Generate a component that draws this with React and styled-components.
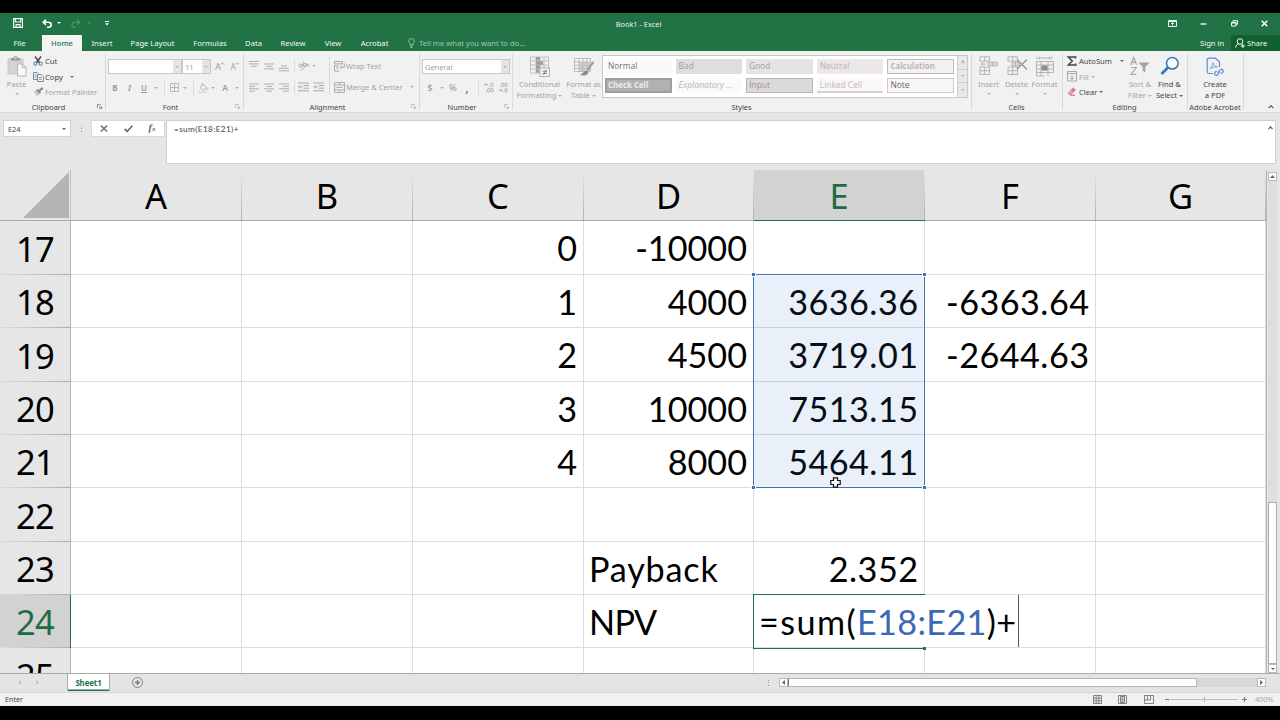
import React from "react";
import styled, { createGlobalStyle, css } from "styled-components";

const ui = `"Noto Sans", "Open Sans", sans-serif`;
const body = `Lato, "Open Sans", sans-serif`;

const Global = createGlobalStyle`
  * { box-sizing: border-box; }
  body { margin: 0; background: #000; overflow: hidden; }
  svg { display: block; flex: none; overflow: visible; }
`;

const Screen = styled.div`
  width: 1280px;
  height: 720px;
  padding: 13px 0 14px;
  background: #000;
  font-family: ${ui};
  font-size: 7.6px;
  line-height: 10px;
  color: #444;
  white-space: nowrap;
  display: flex;
  flex-direction: column;
`;

/* ---------- shared parts ---------- */
const Slot = styled.div`
  flex: none;
  width: ${(p) => p.$w}px;
  display: flex;
  align-items: center;
  justify-content: ${(p) => p.$j || "flex-start"};
`;
const Label = styled.span`
  color: ${(p) => p.$c || (p.$off ? "#a5a1a3" : "#444")};
  letter-spacing: ${(p) => p.$ls || 0}px;
  font-size: ${(p) => p.$s || 7.6}px;
  font-weight: ${(p) => p.$b || 400};
`;
const Arrow = styled.i`
  flex: none;
  width: 0;
  height: 0;
  border: 2px solid transparent;
  border-top-color: ${(p) => p.$c || "#b5b2b3"};
  border-bottom: 0;
`;
const Sep = styled.i`
  flex: none;
  width: 1px;
  height: ${(p) => p.$h || 14}px;
  background: #dadada;
`;

/* ---------- title bar and tabs ---------- */
const TitleBar = styled.header`
  height: 22px;
  flex: none;
  background: #217346;
  color: #e8f2ec;
  display: grid;
  grid-template-columns: 1fr 100px 1fr;
  align-items: center;
`;
const QuickAccess = styled.div`
  display: flex;
  align-items: center;
  padding: 0 0 2px 13px;
`;
const Title = styled.div`
  text-align: center;
  font-size: 7.4px;
  padding: 0 3px 0 0;
`;
const WindowButtons = styled.div`
  display: flex;
  justify-content: flex-end;
  align-items: center;
  padding: 0 12px 1px 0;
`;
const TabBar = styled.nav`
  height: 16px;
  flex: none;
  background: #217346;
  color: #f2f8f4;
  display: flex;
  align-items: center;
`;
const Tab = styled.div`
  flex: none;
  width: ${(p) => p.$w}px;
  height: 16px;
  line-height: 17px;
  text-align: center;
  font-size: 7.6px;
  ${(p) =>
    p.$active &&
    css`
      background: #f3f3f3;
      color: #217346;
      font-weight: 500;
    `}
`;
const TellMe = styled.div`
  display: flex;
  align-items: center;
  gap: 4px;
  padding-left: 9px;
  color: #9cc9ae;
  flex: 1;
`;
const Share = styled.div`
  width: 49px;
  height: 16px;
  background: #0f6130;
  display: flex;
  align-items: center;
  gap: 2px;
  padding-left: 4px;
`;

/* ---------- ribbon ---------- */
const Ribbon = styled.section`
  height: 62px;
  flex: none;
  background: #f1f1f1;
  border-bottom: 1px solid #d9d9d9;
  display: flex;
`;
const Group = styled.div`
  flex: none;
  width: ${(p) => p.$w}px;
  display: grid;
  grid-template-columns: 100%;
  grid-template-rows: 50px 11px;
  background: linear-gradient(#dadada, #dadada) right 3px / 1px 56px no-repeat;
`;
const GroupBody = styled.div`
  display: flex;
  min-width: 0;
`;
const GroupName = styled.div`
  display: grid;
  grid-template-columns: 1fr ${(p) => (p.$plain ? 0 : 5)}px;
  align-items: center;
  padding-right: ${(p) => (p.$plain ? 2 : 4)}px;
  font-size: 7.4px;
  text-align: center;
`;
const Collapse = styled.div`
  width: 31px;
  display: flex;
  align-items: flex-end;
  justify-content: flex-end;
  padding: 0 1px 3px 0;
`;
const Stack = styled.div`
  flex: none;
  width: ${(p) => p.$w}px;
  padding-top: ${(p) => p.$pt || 0}px;
  display: flex;
  flex-direction: column;
`;
const Row = styled.div`
  display: flex;
  align-items: center;
  height: ${(p) => p.$h}px;
  padding-left: ${(p) => p.$pl || 0}px;
`;
const Big = styled.div`
  flex: none;
  width: ${(p) => p.$w}px;
  padding-top: 5px;
  display: flex;
  flex-direction: column;
  align-items: center;
  text-align: center;
  & > svg { margin-bottom: 2px; }
`;
const BigLine = styled.div`
  height: 11px;
  line-height: 11px;
  display: flex;
  align-items: center;
  gap: 2px;
  color: ${(p) => (p.$off ? "#a5a1a3" : "#444")};
`;
const Combo = styled.div`
  flex: none;
  width: ${(p) => p.$w}px;
  height: 15px;
  border: 1px solid #c8c6c7;
  background: #fff;
  display: flex;
  justify-content: space-between;
  align-items: center;
  padding-left: 2px;
  color: #a5a1a3;
`;
const ComboButton = styled.span`
  width: 8px;
  height: 13px;
  background: #e6e4e5;
  display: flex;
  align-items: center;
  justify-content: center;
`;
const Gallery = styled.div`
  width: 366px;
  height: 43px;
  margin: 4px 0 0 1px;
  border: 1px solid #c9c7c8;
  background: #fff;
  display: flex;
`;
const GalleryGrid = styled.div`
  display: grid;
  grid-template-columns: repeat(5, 66.6px);
  grid-auto-rows: 15px;
  gap: 4px;
  padding: 3px 2px;
  width: 354px;
`;
const StyleCell = styled.div`
  font-family: "Open Sans", ${ui};
  font-size: 8.4px;
  line-height: ${(p) => (p.$bd ? 12 : 14)}px;
  padding-left: ${(p) => (p.$bd ? 2 : 3)}px;
  overflow: hidden;
  background: ${(p) => p.$bg};
  color: ${(p) => p.$c};
  border: ${(p) => p.$bd || "0"};
  ${(p) => p.$extra}
`;
const GalleryScroll = styled.div`
  width: 10px;
  border-left: 1px solid #cfcdce;
  background: #e9e7e8;
  display: grid;
  grid-template-rows: repeat(3, 1fr);
  & > span {
    display: flex;
    align-items: center;
    justify-content: center;
    border-bottom: 1px solid #cfcdce;
  }
  & > span:last-child { border-bottom: 0; }
`;

/* ---------- formula bar ---------- */
const FormulaBar = styled.section`
  height: 57px;
  flex: none;
  background: #e6e6e6;
  display: flex;
  align-items: flex-start;
  padding: 7px 4px 0 3px;
`;
const NameBox = styled.div`
  width: 68px;
  height: 17px;
  background: #fff;
  border: 1px solid #d4d4d4;
  display: flex;
  align-items: center;
  justify-content: space-between;
  padding: 0 4px;
  font-size: 7.4px;
`;
const Dots = styled.div`
  width: 20px;
  height: 17px;
  display: flex;
  flex-direction: column;
  align-items: center;
  justify-content: center;
  gap: 1.5px;
  & > i { width: 1px; height: 1px; background: #999; }
`;
const FxButtons = styled.div`
  width: 74px;
  height: 17px;
  background: #fff;
  border: 1px solid #d9d9d9;
  display: grid;
  grid-template-columns: repeat(3, 24px);
  align-items: center;
  justify-items: center;
`;
const Fx = styled.span`
  font-family: "Liberation Serif", serif;
  font-style: italic;
  font-weight: 700;
  font-size: 10px;
  color: #666;
  & > small { font-size: 7px; }
`;
const FormulaInput = styled.div`
  flex: 1;
  height: 44px;
  margin-left: 1px;
  background: #fff;
  border: 1px solid #d0d0d0;
  display: flex;
  justify-content: space-between;
  padding: 3px 2px 0 7px;
  color: #444;
  font-family: Lato, sans-serif;
  font-size: 8.2px;
  letter-spacing: 0.4px;
`;

/* ---------- sheet ---------- */
const Work = styled.main`
  height: 503px;
  flex: none;
  display: flex;
  background: #e6e6e6;
`;
const Sheet = styled.div`
  position: relative;
  width: 1266px;
  height: 503px;
  overflow: hidden;
  display: grid;
  grid-template-columns: 71px 171px 171px 171px 170px 171px 171px 170px;
  grid-template-rows: 51px 54px 53px 54px 53px 53px 54px 53px 53px 54px;
  background: #fff;
`;
const Corner = styled.div`
  background: #e6e6e6;
  border-right: 1px solid #c4c4c4;
  border-bottom: 1px solid #ababab;
  display: flex;
  align-items: flex-end;
  justify-content: flex-end;
  padding: 0 1px 2px 0;
`;
const head = css`
  display: flex;
  align-items: center;
  justify-content: center;
  font-family: ${ui};
  font-size: 34.5px;
  line-height: 40px;
  color: ${(p) => (p.$on ? "#1f6b43" : "#000")};
`;
const ColHead = styled.div`
  ${head};
  padding: 1px 1px 0 0;
  background: linear-gradient(to bottom, #e6e6e6, #b0b0b0) right / 1px 100% no-repeat, ${(p) => (p.$on ? "#d2d2d2" : "#e6e6e6")};
  border-bottom: 1px solid ${(p) => (p.$on ? "#217346" : "#ababab")};
`;
const RowHead = styled.div`
  ${head};
  padding-top: 1px;
  letter-spacing: -0.7px;
  background: linear-gradient(to right, #dcdcdc, #adadad) bottom / 100% 1px no-repeat, ${(p) => (p.$on ? "#d2d2d2" : "#e6e6e6")};
  border-right: ${(p) => (p.$on ? "1.5px solid #217346" : "1px solid #b5b5b5")};
`;
const Cell = styled.div`
  border-right: 1px solid #dcdcdc;
  border-bottom: 1px solid #dcdcdc;
  padding: 1px ${(p) => 6 - (p.$ls || 0)}px 0 5px;
  font-family: ${body};
  font-size: 34.2px;
  line-height: 51px;
  letter-spacing: ${(p) => p.$ls || 0}px;
  color: #000;
  text-align: ${(p) => p.$align || "right"};
`;
const RangeBox = styled.div`
  position: absolute;
  left: 753px;
  top: 104px;
  width: 172px;
  height: 214px;
  border: 1px solid #3f72ae;
  background: rgba(68, 114, 196, 0.11);
  box-shadow: inset 0 0 0 1px rgba(255, 255, 255, 0.35);
`;
const Handle = styled.i`
  position: absolute;
  width: 3px;
  height: 3px;
  background: #3f72ae;
  box-shadow: 0 0 0 1px #fff;
  ${(p) => p.$y}: -2px;
  ${(p) => p.$x}: -2px;
`;
const ActiveCell = styled.div`
  position: absolute;
  left: 753px;
  top: 424px;
  width: 172px;
  height: 55px;
  border: 1px solid #217346;
  border-right: 0;
`;
const Editor = styled.div`
  position: absolute;
  left: 754px;
  top: 425px;
  width: 265px;
  height: 52px;
  padding: 1px 0 0 5px;
  background: #fff;
  border-right: 1px solid #555;
  font-family: ${body};
  font-size: 34.2px;
  line-height: 51px;
  color: #000;
`;
const Token = styled.span`
  letter-spacing: ${(p) => p.$ls}px;
  color: ${(p) => (p.$ref ? "#3a69b5" : "#000")};
`;
const FillHandle = styled.i`
  position: absolute;
  left: 923px;
  top: 477px;
  width: 3px;
  height: 3px;
  background: #217346;
`;
const Pointer = styled.div`
  position: absolute;
  left: 830px;
  top: 307px;
`;
const VScroll = styled.div`
  width: 14px;
  padding: 2px 4px 0 2px;
  border-left: 1px solid #b5b5b5;
  display: flex;
  flex-direction: column;
  align-items: center;
`;
const ScrollButton = styled.span`
  flex: none;
  width: 9px;
  height: 9px;
  background: #fff;
  border: 1px solid #b8b8b8;
  display: flex;
  align-items: center;
  justify-content: center;
`;
const VTrack = styled.div`
  flex: 1;
  width: 9px;
  background: #dedede;
  display: flex;
  align-items: flex-end;
`;
const VThumb = styled.div`
  width: 9px;
  height: 162px;
  background: #fff;
  border: 1px solid #ababab;
`;

/* ---------- sheet tabs and status ---------- */
const SheetTabs = styled.section`
  height: 19px;
  flex: none;
  background: #e4e4e4;
  border-top: 1px solid #ababab;
  display: flex;
  align-items: center;
  padding-bottom: 1px;
`;
const SheetTab = styled.div`
  width: 43px;
  height: 17px;
  margin: -1px 0 0 29px;
  background: #fff;
  border: solid #ababab;
  border-width: 0 1px;
  box-shadow: inset 0 -1.5px 0 #217346;
  color: #217346;
  font-size: 7.9px;
  font-weight: 700;
  line-height: 18px;
  text-align: center;
  letter-spacing: -0.1px;
`;
const HBar = styled.div`
  width: 487px;
  margin-left: auto;
  margin-right: 14px;
  height: 9px;
  display: flex;
  background: #d8d8d8;
`;
const HThumb = styled.div`
  width: 409px;
  height: 9px;
  background: #fff;
  border: 1px solid #b5b5b5;
  border-left-color: #777;
  margin-right: auto;
`;
const Status = styled.footer`
  height: 14px;
  flex: none;
  background: #f1f1f1;
  border-top: 1px solid #d4d4d4;
  display: flex;
  align-items: center;
  padding: 0 5px 1px;
  font-size: 7.2px;
`;
const ZoomTrack = styled.div`
  width: 67px;
  height: 5px;
  background: linear-gradient(#bbb, #bbb) center / 100% 1px no-repeat,
    linear-gradient(#aaa, #aaa) center / 1px 5px no-repeat;
`;

/* ---------- drawings ---------- */
const Svg = ({ w, h, c = "#aaa6a8", sw = 1, children }) => (
  <svg width={w} height={h} viewBox={`0 0 ${w} ${h}`} fill="none" stroke={c} strokeWidth={sw}>
    {children}
  </svg>
);
const Launcher = ({ off }) => (
  <Svg w={5} h={5} c={off ? "#b5b2b3" : "#777"} sw={0.8}>
    <path d="M.4 4V.4H4M2 2l2.4 2.4M4.6 2.4v2.2H2.4" />
  </Svg>
);
const Chevron = ({ c = "#555", w = 6 }) => (
  <Svg w={w} h={4} c={c} sw={1.1}><path d={`M.5 3.2 ${w / 2} .8 ${w - 0.5} 3.2`} /></Svg>
);
const CaretMark = ({ down }) => (
  <Svg w={3} h={10} c="#999" sw={0.9}><path d={down ? "M0 .8 1.5 2.4 3 .8" : "M0 2.4 1.5.8 3 2.4"} /></Svg>
);
const Lines = ({ rows, step = 2.4, h = 10, y = 1 }) => (
  <Svg w={10} h={h} sw={0.9}>
    {rows.map(([a, b], i) => <path key={i} d={`M${a} ${y + i * step}H${b}`} />)}
  </Svg>
);
const PasteIcon = () => (
  <Svg w={20} h={21}>
    <rect x="1" y="3" width="15" height="15" fill="#d6d2d5" stroke="#cbc7ca" />
    <path d="M4 4.5V2h2.5V.6h4V2H13v2.5z" fill="#9c999a" stroke="none" />
    <path d="M7.2 2.3h2.4" stroke="#eee" />
    <path d="M10.5 8h5l3.5 3.5V20h-8.5z" fill="#fafafa" stroke="#b5b2b3" />
    <path d="M15.3 8v3.5H19" stroke="#b5b2b3" />
  </Svg>
);
const CutIcon = () => (
  <Svg w={10} h={10}>
    <path d="M2 .5 6.8 7M8 .5 3.2 7" stroke="#444" strokeWidth="1.4" />
    <circle cx="2.3" cy="7.7" r="1.6" stroke="#3c7a9e" />
    <circle cx="7.7" cy="7.7" r="1.6" stroke="#3c7a9e" />
  </Svg>
);
const CopyIcon = () => (
  <Svg w={11} h={10} c="#5d7f92" sw={0.9}>
    <path d="M.5 7.5v-7h3.6l1.6 1.6v5.4z" fill="#f8f8f8" />
    <path d="M1.7 3h2M1.7 5h2" />
    <path d="M4.5 9.5V2.6h3.8L10.3 4.4v5.1z" fill="#fff" />
    <path d="M5.8 5.3h3M5.8 7.3h3" />
  </Svg>
);
const PainterIcon = () => (
  <Svg w={11} h={10}>
    <path d="M.5 4.5 4 3l3 3-2.4 3.5z" fill="#c9c4c2" stroke="none" />
    <path d="M4 2.5 7.5 6" stroke="#8d8a8b" strokeWidth="1.8" />
    <path d="M6 4 9.8.8" stroke="#8d8a8b" strokeWidth="2.2" />
  </Svg>
);
const BordersIcon = () => (
  <Svg w={9} h={9} c="#b5b2b3" sw={0.9}><path d="M.5.5h8v8h-8zM4.5.5v8M.5 4.5h8" /></Svg>
);
const FillColorIcon = () => (
  <Svg w={11} h={10} sw={0.9}>
    <path d="M2 4.5 5.3 1.3 8.6 4.5 5.3 7.6zM4.2 2.4V.4M8.8 4.5c.9 1 1.1 2 .5 2.6" />
    <path d="M.5 9.2h8" stroke="#e3d5d5" strokeWidth="1.6" />
  </Svg>
);
const AngleIcon = () => (
  <Svg w={11} h={10} sw={0.9}>
    <circle cx="2.3" cy="4.6" r="1.5" /><path d="M3.9 3v3.2M5.2.6v4.8" /><circle cx="6.9" cy="3.8" r="1.4" />
    <path d="M2.5 9.5 10 3.4M7.8 3.2h2.400v2.400" />
  </Svg>
);
const IndentIcon = ({ right }) => (
  <Svg w={11} h={10}>
    <path d="M0 1h11M5.5 3.6H11M5.5 6.2H11M0 8.8h11" />
    <path d={right ? "M0 4.9h4M2.4 3.3 4 4.9 2.4 6.5" : "M4.6 4.9H.6M2.2 3.3.6 4.9l1.6 1.6"} />
  </Svg>
);
const WrapIcon = () => (
  <Svg w={11} h={11}>
    <path d="M.5.5h8v2.4h-8zM.5 4.8h4M.5 4.5v5.6h5M2 7h3" />
    <path d="M10.3 2.3v3.9H6.3M8 4.6 6.3 6.2 8 7.8" />
  </Svg>
);
const MergeIcon = () => (
  <Svg w={11} h={11} sw={0.9}>
    <path d="M.5.5h10v10H.5zM.5 3h10M.5 8h10M5.5.5V3M5.5 8v2.5M2.4 5.5h6.2" />
  </Svg>
);
const DecimalIcon = ({ inc }) => (
  <Svg w={11} h={11} sw={0.8}>
    {inc ? <path d="M4.2 2.6H.6M2 1.2.6 2.6 2 4" /> : <path d="M.6 8.4h3.6M2.8 7l1.4 1.4-1.4 1.4" />}
    <rect x="7" y="1" width="2.2" height="3.6" rx="1" />
    {!inc && <rect x="3.6" y="1" width="2.2" height="3.6" rx="1" />}
    <rect x="7" y="6.4" width="2.2" height="3.6" rx="1" />
    {inc && <rect x="3.6" y="6.4" width="2.2" height="3.6" rx="1" />}
    <path d={inc ? "M5.4 4.6h.9M2 10h.9" : "M2 4.6h.9M5.4 10h.9"} />
  </Svg>
);
const ConditionalIcon = () => (
  <Svg w={20} h={21} c="#bdbabb" sw={0.9}>
    <path d="M.5 1h18v16H.5zM.5 5h18M.5 9h18M.5 13h18M6 1v16M10 1v16M14 1v16" />
    <path d="M6 2.800h4M6 7h7M6 11h4M6 15h3" stroke="#a09d9e" strokeWidth="3.400" />
    <rect x="10" y="12" width="9.5" height="8.5" fill="#f6f6f6" stroke="#aaa6a8" />
    <path d="M12.6 15.2h4.4M12.6 17.4h4.4M16.2 13.8l-2.6 5" stroke="#777" />
  </Svg>
);
const TableIcon = () => (
  <Svg w={20} h={21} c="#bdbabb">
    <path d="M.5 2.5h16v13H.5z" fill="#f6f6f6" />
    <path d="M5 6h11v9H5z" fill="#d3d0d1" stroke="none" />
    <path d="M.5 6h16M.5 9.2h16M.5 12.4h16M5 2.5v13M9 2.5v13M13 2.5v13" />
    <path d="M19.5 6c-1.5 2-4 5.5-6 8" stroke="#a09d9e" strokeWidth="2.2" />
    <path d="M12.5 14.5c-3 .5-3.5 3-6.5 4.5 3.5 1 8 .5 8.5-3z" fill="#8d8a8b" stroke="none" />
  </Svg>
);
const CellsIcon = ({ kind }) => (
  <Svg w={20} h={21} c="#b0adae" sw={0.9}>
    {kind === "format" ? (
      <>
        <path d="M2 .5v3M17 .5v3M3.5 2h12M5 .8 3.5 2 5 3.2M14 .8 15.5 2 14 3.2" />
        <path d="M1.5 5.5h17v11h-17zM1.5 9h17M1.5 13h17M6 5.5V20M13 5.5V20M1.5 16.5V20h8" />
        <rect x="6.5" y="9.5" width="6" height="5" fill="#8d8a8b" stroke="none" />
      </>
    ) : (
      <>
        <path d="M1 .8h9.500v4.400H1zM5.700.8v4.400" />
        <path d="M1 11h9.500v7.500H1zM1 14.700h9.500M5.700 11v7.500" />
        {kind === "insert" ? (
          <path d="M9 6.200h9.500v3.600H9zM13.700 6.200v3.600M7 8H2M3.800 6.200 2 8l1.800 1.800" fill="#dcdadb" />
        ) : (
          <>
            <path d="M5 6.200h7v3.600H5zM8.500 6.200v3.600" fill="#dcdadb" />
            <path d="M10 3.500 20 13.500M20 3.500 10 13" stroke="#9a9798" strokeWidth="1.5" />
          </>
        )}
      </>
    )}
  </Svg>
);
const SigmaIcon = () => (
  <Svg w={10} h={10} c="#444" sw={1.5}><path d="M8.6 2.5V1H1.3L5.2 5 1.3 9h7.5V7.4" /></Svg>
);
const FillIcon = () => (
  <Svg w={10} h={11}><path d="M.5.5h9V10h-9zM.5 2.5h9M5 3.8v4.7M3 6.7l2 2 2-2" /></Svg>
);
const EraserIcon = () => (
  <Svg w={10} h={9}>
    <path d="M1.5 5.2 6 .5l3 2.3-4.5 5z" fill="#e07a9b" stroke="none" />
    <path d="M2.7 3.9 6 6.3" stroke="#f6dfe6" />
    <path d="M1 6.2 3.5 8.2H8" stroke="#c2567c" />
  </Svg>
);
const SortIcon = () => (
  <Svg w={20} h={21} c="#aaa6a8" sw={1.2}>
    <path d="M.8 9 3.7 1.5 6.6 9M1.8 6.3h3.8M1 11.5h5.2L1 18.5h5.500" />
    <path d="M8.5 6.5h11L15.3 11v5.5l-2.600-1.800V11z" fill="#a5a2a3" stroke="none" />
  </Svg>
);
const FindIcon = () => (
  <Svg w={20} h={21} c="#3a76ad">
    <path d="M8 11.500 1.500 18" strokeWidth="2.600" />
    <circle cx="12.300" cy="7.300" r="5.800" fill="#f8fbfd" strokeWidth="1.500" />
  </Svg>
);
const PdfIcon = () => (
  <Svg w={18} h={21} c="#5b8fd0" sw={1.2}>
    <path d="M7 17.500H3A1.800 1.800 0 0 1 1.200 15.700V4A1.800 1.800 0 0 1 3 2.200h6.500L13.500 6v5" />
    <path d="M4 12.800c1.600-1.400 3-4 3-6.300M7 6.500c.4 2.500 1.700 4.100 4.300 4.500M4 12.800c1.700-1.500 4.500-2.200 7.300-1.800" strokeWidth=".8" />
    <path d="m11.500 16.600 2.800-2.800a1.700 1.700 0 0 1 2.500 2.500l-1.500 1.500M14.200 15.800l-2.800 3a1.600 1.600 0 0 1-2.400-2.300l1.600-1.700" />
  </Svg>
);

const DropArrow = ({ w = 7 }) => <Slot $w={w} $j="center"><Arrow /></Slot>;

const TABS = [
  ["File", 39], ["Home", 40, true], ["Insert", 40], ["Page Layout", 61],
  ["Formulas", 54], ["Data", 33], ["Review", 46], ["View", 34], ["Acrobat", 49],
];
const bold = css`font-weight: 700; font-size: 7.9px;`;
const STYLES = [
  ["Normal", "#fbf8fa", "#7a7477"],
  ["Bad", "#e0dde0", "#a19b9f"],
  ["Good", "#e6e3e6", "#a19b9f"],
  ["Neutral", "#ece7e8", "#bab2b5"],
  ["Calculation", "#f3f0f2", "#bcb6b9", "1px solid #c0bcbe", bold],
  ["Check Cell", "#b3b0b2", "#ececec", "2px solid #a09d9f", css`${bold} line-height: 10px; padding-left: 1px;`],
  ["Explanatory ...", "#fbf9fb", "#b8b2b5", null, css`font-style: italic; letter-spacing: 0.1px;`],
  ["Input", "#dcd9dc", "#9a9497", "1px solid #bab6b8"],
  ["Linked Cell", "#faf7f9", "#bcb4b6", null, css`box-shadow: inset 0 -2px #d5d0d3;`],
  ["Note", "#f8f6f7", "#6d686a", "1px solid #cdcacb"],
];
const COLS = ["A", "B", "C", "D", "E", "F", "G"];
const DATA = {
  17: { C: "0", D: "-10000" },
  18: { C: "1", D: "4000", E: "3636.36", F: "-6363.64" },
  19: { C: "2", D: "4500", E: "3719.01", F: "-2644.63" },
  20: { C: "3", D: "10000", E: "7513.15" },
  21: { C: "4", D: "8000", E: "5464.11" },
  22: {},
  23: { D: "Payback", E: "2.352" },
  24: { D: "NPV" },
  25: {},
};
const SPACING = { Payback: 0.8, NPV: -0.7 };
const spacingOf = (v = "") => SPACING[v] || (v.includes(".") ? 0.45 : 0);

function RibbonArea() {
  return (
    <Ribbon>
      <Group $w={106}>
        <GroupBody>
          <Big $w={33}>
            <PasteIcon />
            <BigLine $off>Paste</BigLine>
            <Row $h={8}><Arrow /></Row>
          </Big>
          <Stack $w={70} $pt={2}>
            <Row $h={16}><Slot $w={12}><CutIcon /></Slot><Label>Cut</Label></Row>
            <Row $h={15}><Slot $w={12}><CopyIcon /></Slot><Slot $w={25}><Label>Copy</Label></Slot><Arrow $c="#666" /></Row>
            <Row $h={15}><Slot $w={12}><PainterIcon /></Slot><Label $off $ls={-0.1}>Format Painter</Label></Row>
          </Stack>
        </GroupBody>
        <GroupName><span>Clipboard</span><Launcher /></GroupName>
      </Group>

      <Group $w={138}>
        <GroupBody>
          <Stack $w={137} $pt={8}>
            <Row $h={15} $pl={2}>
              <Combo $w={74}><span /><ComboButton><Arrow /></ComboButton></Combo>
              <Combo $w={29}><span>11</span><ComboButton><Arrow /></ComboButton></Combo>
              <Slot $w={13} $j="flex-end"><Label $off $s={9.5}>A</Label><CaretMark /></Slot>
              <Slot $w={15} $j="flex-end"><Label $off $s={8.5}>A</Label><CaretMark down /></Slot>
            </Row>
            <Row $h={27} $pl={2}>
              <Slot $w={14} $j="center"><Label $c="#999" $b={700} $s={8}>B</Label></Slot>
              <Slot $w={15} $j="center"><Label $c="#999" $b={600} $s={8}><em>I</em></Label></Slot>
              <Slot $w={14} $j="center"><Label $c="#999" $b={600} $s={8}><u>U</u></Label></Slot>
              <DropArrow w={9} /><Slot $w={9} $j="center"><Sep /></Slot>
              <Slot $w={10} $j="center"><BordersIcon /></Slot>
              <DropArrow w={11} /><Slot $w={7} $j="center"><Sep /></Slot>
              <Slot $w={13} $j="center"><FillColorIcon /></Slot>
              <DropArrow w={6} />
              <Slot $w={18} $j="center"><Label $c="#999" $b={600} $s={8.5}>A</Label></Slot>
              <DropArrow w={6} />
            </Row>
          </Stack>
        </GroupBody>
        <GroupName><span>Font</span><Launcher off /></GroupName>
      </Group>

      <Group $w={176}>
        <GroupBody>
          <Stack $w={85} $pt={6}>
            <Row $h={17} $pl={5}>
              <Slot $w={15}><Lines rows={[[0, 10], [0, 10], [2, 8]]} y={0.5} /></Slot>
              <Slot $w={15}><Lines rows={[[0, 10], [2, 8], [0, 10]]} y={3} /></Slot>
              <Slot $w={15}><Lines rows={[[2, 8], [0, 10], [0, 10]]} y={5} /></Slot>
              <Slot $w={4}><Sep /></Slot>
              <Slot $w={12}><AngleIcon /></Slot><DropArrow w={7} />
            </Row>
            <Row $h={25} $pl={5}>
              <Slot $w={15}><Lines rows={[[0, 10], [0, 6], [0, 10], [0, 6]]} y={2} /></Slot>
              <Slot $w={15}><Lines rows={[[0, 10], [2, 8], [0, 10], [2, 8]]} y={2} /></Slot>
              <Slot $w={15}><Lines rows={[[0, 10], [4, 10], [0, 10], [4, 10]]} y={2} /></Slot>
              <Slot $w={4}><Sep /></Slot>
              <Slot $w={15}><IndentIcon /></Slot><Slot $w={12}><IndentIcon right /></Slot>
            </Row>
          </Stack>
          <Row $h={50}><Sep $h={38} /></Row>
          <Stack $w={86} $pt={6}>
            <Row $h={18} $pl={4}><Slot $w={12}><WrapIcon /></Slot><Label $off $ls={-0.05}>Wrap Text</Label></Row>
            <Row $h={24} $pl={4}><Slot $w={12}><MergeIcon /></Slot><Slot $w={64}><Label $off>Merge &amp; Center</Label></Slot><Arrow /></Row>
          </Stack>
        </GroupBody>
        <GroupName><span>Alignment</span><Launcher off /></GroupName>
      </Group>

      <Group $w={93}>
        <GroupBody>
          <Stack $w={92} $pt={8}>
            <Row $h={15} $pl={2}><Combo $w={88}><Label $off $ls={-0.1}>General</Label><ComboButton><Arrow /></ComboButton></Combo></Row>
            <Row $h={27} $pl={3}>
              <Slot $w={14} $j="center"><Label $c="#999" $s={9.5}>$</Label></Slot>
              <DropArrow w={9} />
              <Slot $w={14} $j="center"><Label $c="#999" $s={9.5}>%</Label></Slot>
              <Slot $w={14} $j="center"><Label $c="#888" $s={12} $b={700}>,</Label></Slot>
              <Slot $w={8} $j="center"><Sep /></Slot>
              <Slot $w={14} $j="center"><DecimalIcon inc /></Slot>
              <Slot $w={14} $j="center"><DecimalIcon /></Slot>
            </Row>
          </Stack>
        </GroupBody>
        <GroupName><span>Number</span><Launcher off /></GroupName>
      </Group>

      <Group $w={459}>
        <GroupBody>
          <Big $w={53}>
            <ConditionalIcon />
            <BigLine $off>Conditional</BigLine>
            <BigLine $off>Formatting<Arrow /></BigLine>
          </Big>
          <Big $w={35}>
            <TableIcon />
            <BigLine $off><Label $off $ls={-0.1}>Format as</Label></BigLine>
            <BigLine $off>Table<Arrow /></BigLine>
          </Big>
          <Gallery>
            <GalleryGrid>
              {STYLES.map(([n, bg, c, bd, extra]) => (
                <StyleCell key={n} $bg={bg} $c={c} $bd={bd} $extra={extra}>{n}</StyleCell>
              ))}
            </GalleryGrid>
            <GalleryScroll><span><Chevron c="#aaa" w={4} /></span><span><Arrow /></span><span><Arrow /></span></GalleryScroll>
          </Gallery>
        </GroupBody>
        <GroupName $plain><span>Styles</span></GroupName>
      </Group>

      <Group $w={91}>
        <GroupBody>
          <Big $w={33}><CellsIcon kind="insert" /><BigLine $off>Insert</BigLine><Row $h={8}><Arrow /></Row></Big>
          <Big $w={23}><CellsIcon kind="delete" /><BigLine $off>Delete</BigLine><Row $h={8}><Arrow /></Row></Big>
          <Big $w={33}><CellsIcon kind="format" /><BigLine $off>Format</BigLine><Row $h={8}><Arrow /></Row></Big>
        </GroupBody>
        <GroupName $plain><span>Cells</span></GroupName>
      </Group>

      <Group $w={125}>
        <GroupBody>
          <Stack $w={62} $pt={2}>
            <Row $h={16} $pl={4}><Slot $w={12}><SigmaIcon /></Slot><Slot $w={41}><Label>AutoSum</Label></Slot><Arrow $c="#666" /></Row>
            <Row $h={15} $pl={4}><Slot $w={12}><FillIcon /></Slot><Slot $w={12}><Label $off>Fill</Label></Slot><Arrow /></Row>
            <Row $h={15} $pl={4}><Slot $w={12}><EraserIcon /></Slot><Slot $w={20}><Label>Clear</Label></Slot><Arrow $c="#666" /></Row>
          </Stack>
          <Big $w={30}><SortIcon /><BigLine $off>Sort &amp;</BigLine><BigLine $off>Filter<Arrow /></BigLine></Big>
          <Big $w={29}><FindIcon /><BigLine>Find &amp;</BigLine><BigLine>Select<Arrow $c="#666" /></BigLine></Big>
        </GroupBody>
        <GroupName $plain><span>Editing</span></GroupName>
      </Group>

      <Group $w={56}>
        <GroupBody>
          <Big $w={54}><PdfIcon /><BigLine>Create</BigLine><BigLine>a PDF</BigLine></Big>
        </GroupBody>
        <GroupName $plain><span>Adobe Acrobat</span></GroupName>
      </Group>
      <Collapse><Chevron /></Collapse>
    </Ribbon>
  );
}

function Grid() {
  return (
    <Sheet>
      <Corner>
        <svg width="46" height="46" viewBox="0 0 46 46"><path d="M46 0v46H0z" fill="#b4b4b4" /></svg>
      </Corner>
      {COLS.map((c) => <ColHead key={c} $on={c === "E"}>{c}</ColHead>)}
      {Object.entries(DATA).map(([r, cells]) => (
        <React.Fragment key={r}>
          <RowHead $on={r === "24"}>{r}</RowHead>
          {COLS.map((c) => (
            <Cell key={c} $ls={spacingOf(cells[c])} $align={/^[PN]/.test(cells[c] || "") ? "left" : "right"}>
              {cells[c]}
            </Cell>
          ))}
        </React.Fragment>
      ))}
      <RangeBox>
        <Handle $x="left" $y="top" /><Handle $x="right" $y="top" />
        <Handle $x="left" $y="bottom" /><Handle $x="right" $y="bottom" />
      </RangeBox>
      <ActiveCell />
      <Editor>
        <Token $ls={1.4}>=sum(</Token><Token $ls={0.35} $ref>E18:E21</Token><Token $ls={0.3}>)+</Token>
      </Editor>
      <FillHandle />
      <Pointer>
        <svg width="11" height="11" viewBox="0 0 11 11">
          <path d="M3.5.8h4v2.700h2.700v4H7.500v2.700h-4V7.500H.8v-4h2.700z" fill="#fff" stroke="#111" strokeWidth="1.2" />
        </svg>
      </Pointer>
    </Sheet>
  );
}

export default function App() {
  return (
    <Screen>
      <Global />
      <TitleBar>
        <QuickAccess>
          <Slot $w={29}>
            <Svg w={10} h={10} c="#fff" sw={1.1}><path d="M.6.6h8.800v8.800H.6zM2.300.6v3.400h5.400V.6M3 9.400V6.600h4v2.800" /></Svg>
          </Slot>
          <Slot $w={15}>
            <Svg w={11} h={9} c="#fff" sw={1.6}><path d="M4 .6 1.200 3.200 4 5.800M1.400 3.200h4.800c4 0 4 5 0 5H5" /></Svg>
          </Slot>
          <Slot $w={14}><Arrow $c="#fff" /></Slot>
          <Slot $w={16}>
            <Svg w={10} h={9} c="#4b9069" sw={1.4}><path d="M6 .6 8.800 3.200 6 5.800M8.600 3.200H4c-4 0-4 5 0 5h1" /></Svg>
          </Slot>
          <Slot $w={18}><Arrow $c="#4b9069" /></Slot>
          <Svg w={4} h={5} c="#fff" sw={1}><path d="M0 .5h4" /><path d="M0 2.200h4L2 4.500z" fill="#fff" stroke="none" /></Svg>
        </QuickAccess>
        <Title>Book1 - Excel</Title>
        <WindowButtons>
          <Slot $w={32}><Svg w={9} h={7} c="#e6f2ea"><path d="M.5.5h8v6h-8zM.5 1.500h8M4.500 5.500v-3M3 4l1.500-1.500L6 4" /></Svg></Slot>
          <Slot $w={31}><Svg w={7} h={7} c="#fff" sw={1.3}><path d="M.5 4h6" /></Svg></Slot>
          <Slot $w={30}><Svg w={7} h={7} c="#fff"><path d="M.5 2.500h4.500v3.500H.5zM2 2.500V.7h4.500v3.500H5M.5 3h4.500" /></Svg></Slot>
          <Svg w={7} h={7} c="#fff" sw={1.5}><path d="m.7.7 5.600 5.600M6.300.7.7 6.300" /></Svg>
        </WindowButtons>
      </TitleBar>
      <TabBar>
        {TABS.map(([n, w, active], i) => (
          <React.Fragment key={n}>
            {i === 1 && <Slot $w={3} />}
            <Tab $w={w} $active={active}>{n}</Tab>
          </React.Fragment>
        ))}
        <TellMe>
          <Svg w={7} h={10} c="#a5cfb6" sw={0.9}><path d="M2.200 7V5.800C.2 4.300.3.6 3.500.6s3.300 3.700 1.300 5.200V7zM2.300 8.200h2.400M2.600 9.500h1.800" /></Svg>
          Tell me what you want to do...
        </TellMe>
        <Slot $w={31}>Sign in</Slot>
        <Share>
          <Svg w={10} h={10} c="#fff"><circle cx="5" cy="3.500" r="2.800" /><path d="M.6 9.500c.3-2 1.400-3 2.900-3.400M5.800 8h4M7.800 6v4" /></Svg>
          Share
        </Share>
      </TabBar>
      <RibbonArea />
      <FormulaBar>
        <NameBox>E24<Arrow $c="#666" /></NameBox>
        <Dots><i /><i /><i /></Dots>
        <FxButtons>
          <Svg w={8} h={7} c="#666" sw={1.3}><path d="m.8.5 6.400 6M7.200.5.8 6.500" /></Svg>
          <Svg w={9} h={7} c="#666" sw={1.6}><path d="m.6 3.800 2.600 2.500L8.400.8" /></Svg>
          <Fx>f<small>x</small></Fx>
        </FxButtons>
        <FormulaInput><span>=sum(E18:E21)+</span><Row $h={8}><Chevron w={5} /></Row></FormulaInput>
      </FormulaBar>
      <Work>
        <Grid />
        <VScroll>
          <ScrollButton><svg width="5" height="3"><path d="M0 3h5L2.500 0z" fill="#666" /></svg></ScrollButton>
          <VTrack><VThumb /></VTrack>
          <ScrollButton><Arrow $c="#666" /></ScrollButton>
        </VScroll>
      </Work>
      <SheetTabs>
        <Slot $w={38} $j="space-between">
          <Slot $w={21} $j="flex-end"><svg width="3" height="5"><path d="M3 0v5L0 2.500z" fill="#c3c3c3" /></svg></Slot>
          <svg width="2" height="5"><path d="M0 0v5l3-2.500z" fill="#c3c3c3" /></svg>
        </Slot>
        <SheetTab>Sheet1</SheetTab>
        <Slot $w={33} $j="flex-end">
          <Svg w={11} h={11} c="#777" sw={0.9}><circle cx="5.500" cy="5.500" r="5" /><path d="M5.500 3v5M3 5.500h5" strokeWidth="1.4" /></Svg>
        </Slot>
        <Slot $w={635} $j="flex-end"><Dots><i /><i /><i /></Dots></Slot>
        <HBar>
          <ScrollButton><svg width="3" height="5"><path d="M3 0v5L0 2.500z" fill="#666" /></svg></ScrollButton>
          <HThumb />
          <ScrollButton><svg width="3" height="5"><path d="M0 0v5l3-2.500z" fill="#666" /></svg></ScrollButton>
        </HBar>
      </SheetTabs>
      <Status>
        <Slot $w={1088}>Enter</Slot>
        <Slot $w={25}><Svg w={9} h={9} c="#777" sw={0.9}><path d="M.5.5h8v8h-8zM.5 3.200h8M.5 5.800h8M3.200.5v8M5.800.5v8" /></Svg></Slot>
        <Slot $w={26}><Svg w={9} h={9} c="#777" sw={0.9}><path d="M.5.5h8v8h-8z" /><path d="M2.500 1.500h4v6h-4zM3.500 3h2M3.500 4.500h2M3.500 6h2" fill="#ddd" /></Svg></Slot>
        <Slot $w={21}><Svg w={10} h={9} c="#777" sw={0.9}><path d="M.5.5h9v8h-9zM3.500.5v4.500h3V.5M.5 5h3" /></Svg></Slot>
        <Slot $w={6}><Svg w={5} h={5} c="#777"><path d="M0 2.500h4.500" /></Svg></Slot>
        <ZoomTrack />
        <Slot $w={17}><Slot $w={9} $j="flex-end"><Svg w={5} h={5} c="#777"><path d="M0 2.500h5M2.500 0v5" /></Svg></Slot></Slot>
        <Label $c="#a5a5a5" $s={7.2}>400%</Label>
      </Status>
    </Screen>
  );
}
